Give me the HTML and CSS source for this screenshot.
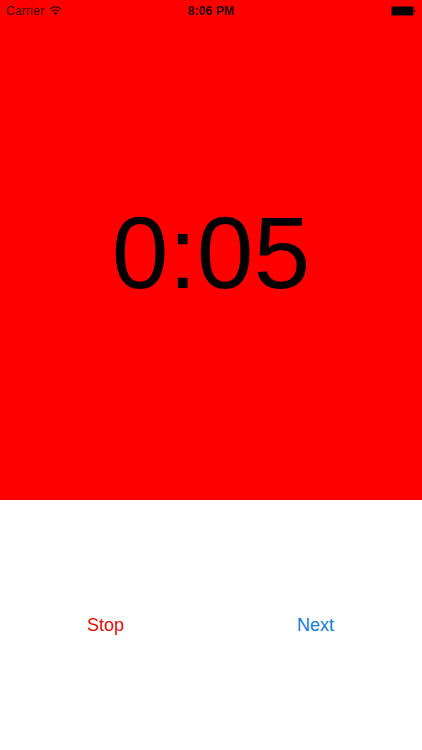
FILE: index.html
```
<!DOCTYPE html>
<html lang="en">
  <head>
    <meta charset="UTF-8" />
    <meta name="viewport" content="width=device-width, initial-scale=1.0" />
    <title>Timer</title>
    <link rel="stylesheet" href="styles.css">
  </head>
  <body>
    <div class="timer">
      <div class="status-bar">
        <div class="carrier">
          <span>Carrier</span>
          <svg class="wifi" width="13" height="9" viewBox="0 0 13 9">
            <path d="M0.9 3.1a8 8 0 0 1 11.2 0" />
            <path d="M2.9 5.3a5.1 5.1 0 0 1 7.2 0" />
            <path class="dot" d="M6.5 8.9L4.5 6.9a2.8 2.8 0 0 1 4 0z" />
          </svg>
        </div>
        <div class="clock">8:06 PM</div>
        <svg class="battery" width="25" height="10" viewBox="0 0 25 10">
          <rect class="shell" x="0.25" y="0.25" width="22.5" height="9.5" rx="1.2" />
          <rect x="0.8" y="0.8" width="21.4" height="8.4" rx="0.5" />
          <path d="M23.4 3.4c1.2 0.3 1.2 2.9 0 3.2z" />
        </svg>
      </div>
      <div class="time">0:05</div>
    </div>

    <div class="controls">
      <button class="stop">Stop</button>
      <button class="next">Next</button>
    </div>
  </body>
</html>
```
FILE: styles.css
```
body {
  margin: 0;
  height: 750px;
  font-family: "Liberation Sans", Arial, sans-serif;
  background-color: #fff;
  display: flex;
  flex-direction: column;
  overflow: hidden;
}

.timer {
  height: 500px;
  background-color: #ff0000;
  color: #000;
  display: flex;
  flex-direction: column;
}

.status-bar {
  height: 22px;
  padding: 0 6px;
  display: grid;
  grid-template-columns: 1fr auto 1fr;
  align-items: center;
  font-size: 12px;
}

.carrier {
  display: flex;
  align-items: center;
  gap: 5px;
  color: #3d0000;
  letter-spacing: 0.25px;
}

.wifi {
  margin-bottom: 2px;
  fill: none;
  stroke: #3d0000;
  stroke-width: 1.3;
}

.wifi .dot {
  fill: #3d0000;
  stroke: none;
}

.clock {
  font-weight: bold;
  color: #2a0000;
  letter-spacing: 0.15px;
}

.battery {
  justify-self: end;
}

.battery .shell {
  fill: none;
  stroke: #500000;
  stroke-width: 0.5;
}

.time {
  flex: 1;
  display: flex;
  justify-content: center;
  align-items: center;
  padding-bottom: 16px;
  font-size: 102px;
}

.controls {
  flex: 1;
  display: grid;
  grid-template-columns: 1fr 1fr;
}

button {
  padding: 0;
  border: none;
  background: none;
  font-family: inherit;
  font-size: 18px;
  cursor: pointer;
}

.stop {
  color: #dc0e0e;
}

.next {
  padding-right: 2px;
  color: #147ad6;
}
```
